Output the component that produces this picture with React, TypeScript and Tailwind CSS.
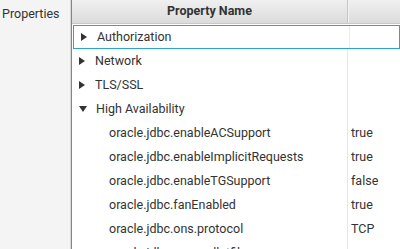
import React from "react";

type Row = { label: string; value?: string; level: number; arrow?: "right" | "down"; selected?: boolean };

const rows: Row[] = [
  { label: "Authorization", level: 0, arrow: "right", selected: true },
  { label: "Network", level: 0, arrow: "right" },
  { label: "TLS/SSL", level: 0, arrow: "right" },
  { label: "High Availability", level: 0, arrow: "down" },
  { label: "oracle.jdbc.enableACSupport", value: "true", level: 1 },
  { label: "oracle.jdbc.enableImplicitRequests", value: "true", level: 1 },
  { label: "oracle.jdbc.enableTGSupport", value: "false", level: 1 },
  { label: "oracle.jdbc.fanEnabled", value: "true", level: 1 },
  { label: "oracle.jdbc.ons.protocol", value: "TCP", level: 1 },
  { label: "oracle.jdbc.ons.walletfile", value: "", level: 1 },
];

function Arrow({ dir }: { dir: "right" | "down" }) {
  return dir === "right" ? (
    <svg width="7" height="8" viewBox="0 0 7 8" className="shrink-0">
      <path d="M0 0 L6 4 L0 8 Z" fill="#333" />
    </svg>
  ) : (
    <svg width="8" height="7" viewBox="0 0 8 7" className="shrink-0">
      <path d="M0 0 L8 0 L4 6 Z" fill="#333" />
    </svg>
  );
}

export default function App() {
  return (
    <div className="w-[400px] h-[249px] overflow-hidden flex bg-white font-['Roboto',sans-serif] text-[12.5px] text-[#333]">
      {/* left label panel */}
      <div className="w-[70px] shrink-0 bg-[#f4f4f4] pl-[2px] pt-[5px] text-[#333]">Properties</div>
      <div className="w-px bg-[#d8d8d8]" />
      <div className="w-px bg-[#2ca3d6]" />

      {/* table */}
      <div className="flex-1 flex flex-col">
        <div className="h-[24px] flex shrink-0 bg-gradient-to-b from-[#f0f0f0] to-[#dcdcdc] border-b border-[#c8c8c8]">
          <div className="w-[276px] flex items-center justify-center font-bold text-[#333] border-r border-[#c4c4c4]">
            Property Name
          </div>
          <div className="w-px bg-[#f4f4f4]" />
          <div className="flex-1" />
        </div>
        <div className="flex-1 flex flex-col">
          {rows.map((r, i) => (
            <div
              key={i}
              className={
                "h-[24px] shrink-0 flex " +
                (r.selected ? "border-[1.5px] border-[#2ca3d6] ml-[1px] mt-[1px]" : "")
              }
            >
              <div className="w-[275px] shrink-0 flex items-center">
                {r.level === 0 ? (
                  <div className="flex items-center pl-[7px] gap-[9px]">
                    <Arrow dir={r.arrow!} />
                    <span>{r.label}</span>
                  </div>
                ) : (
                  <span className="pl-[37px]">{r.label}</span>
                )}
              </div>
              <div className={"w-px shrink-0 " + (r.selected ? "bg-[#ececec]" : "bg-[#e6e6e6]")} />
              <div className="flex-1 flex items-center pl-[3px]">{r.value}</div>
            </div>
          ))}
        </div>
      </div>
    </div>
  );
}
